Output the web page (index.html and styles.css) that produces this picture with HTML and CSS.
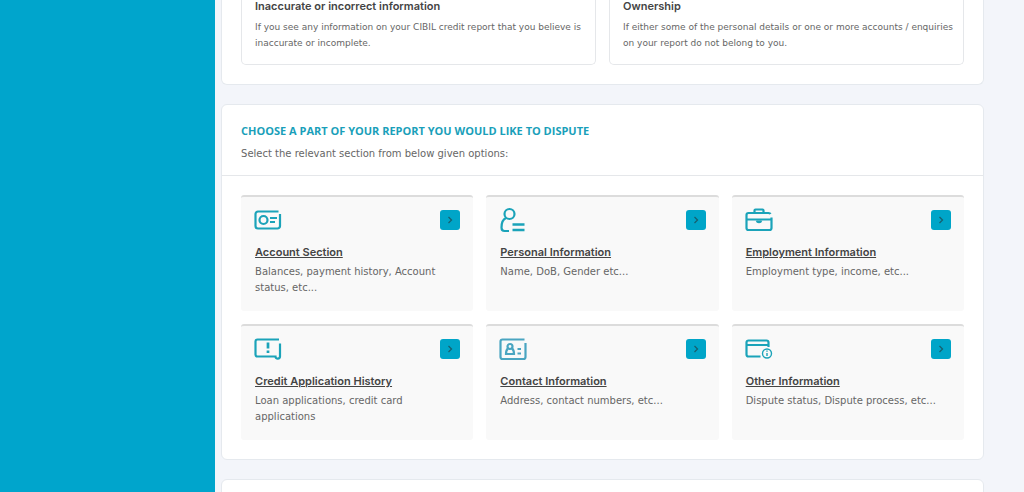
FILE: index.html
```html
<!DOCTYPE html>
<html lang="en">
<head>
<meta charset="utf-8">
<meta name="viewport" content="width=device-width, initial-scale=1">
<title>Dispute Center</title>
<link rel="stylesheet" href="styles.css">
</head>
<body>
<div class="layout">
  <aside class="sidebar" aria-label="Sidebar"></aside>
  <main class="content">
    <section class="panel panel-top">
      <article class="reason">
        <h3>Inaccurate or incorrect information</h3>
        <p>If you see any information on your CIBIL credit report that you believe is inaccurate or incomplete.</p>
      </article>
      <article class="reason">
        <h3>Ownership</h3>
        <p>If either some of the personal details or one or more accounts / enquiries on your report do not belong to you.</p>
      </article>
    </section>

    <section class="panel">
      <header class="panel-head">
        <h2>CHOOSE A PART OF YOUR REPORT YOU WOULD LIKE TO DISPUTE</h2>
        <p>Select the relevant section from below given options:</p>
      </header>
      <div class="options">
        <article class="option">
          <div class="option-bar">
            <svg class="icon" viewBox="0 0 28 28" aria-hidden="true"><path d="M24.500 5.500H4a2.500 2.500 0 0 0-2.500 2.500v12A2.500 2.500 0 0 0 4 22.500h19.500a2.500 2.500 0 0 0 2.500-2.500V8"/><circle cx="9.500" cy="14" r="4"/><path d="M16 12h7M16 16h5"/></svg>
            <button class="go" aria-label="Open Account Section"><svg viewBox="0 0 20 20"><path d="M8.500 7l3 3-3 3"/></svg></button>
          </div>
          <a href="#account">Account Section</a>
          <p>Balances, payment history, Account status, etc...</p>
        </article>
        <article class="option">
          <div class="option-bar">
            <svg class="icon" viewBox="0 0 28 28" aria-hidden="true"><circle cx="10.500" cy="8" r="5"/><path d="M7 12C3.500 13.500 2.500 17 2.500 21.500 2.500 24 3.500 25 5.500 25H10"/><path class="thick" d="M13.500 18.500h12M13.500 24h12"/></svg>
            <button class="go" aria-label="Open Personal Information"><svg viewBox="0 0 20 20"><path d="M8.500 7l3 3-3 3"/></svg></button>
          </div>
          <a href="#personal">Personal Information</a>
          <p>Name, DoB, Gender etc...</p>
        </article>
        <article class="option">
          <div class="option-bar">
            <svg class="icon" viewBox="0 0 28 28" aria-hidden="true"><path d="M25.500 8c-.3-.8-1-1-2-1H3.500A2 2 0 0 0 1.500 9V22a2 2 0 0 0 2 2h21a2 2 0 0 0 2-2V11.500M9.500 7V4.500a1 1 0 0 1 1-1H17.500a1 1 0 0 1 1 1V7M1.500 13.500H26.500"/><path class="thick" d="M12 14.500c.5 2 3.500 2 4 0"/></svg>
            <button class="go" aria-label="Open Employment Information"><svg viewBox="0 0 20 20"><path d="M8.500 7l3 3-3 3"/></svg></button>
          </div>
          <a href="#employment">Employment Information</a>
          <p>Employment type, income, etc...</p>
        </article>
        <article class="option">
          <div class="option-bar">
            <svg class="icon" viewBox="0 0 28 28" aria-hidden="true"><path d="M25 4.500H3.500A2 2 0 0 0 1.500 6.500V19.500a2 2 0 0 0 2 2H21.500c0 3 4.500 2.500 4.500 0V8.500"/><path class="thick" d="M14 7.500v6M14 15.500v2.500"/></svg>
            <button class="go" aria-label="Open Credit Application History"><svg viewBox="0 0 20 20"><path d="M8.500 7l3 3-3 3"/></svg></button>
          </div>
          <a href="#credit">Credit Application History</a>
          <p>Loan applications, credit card applications</p>
        </article>
        <article class="option">
          <div class="option-bar">
            <svg class="icon icon-soft" viewBox="0 0 28 28" aria-hidden="true"><path d="M25.500 4.500H3.500A2 2 0 0 0 1.500 6.500V22a2 2 0 0 0 2 2h21a2 2 0 0 0 2-2V8"/><circle cx="11" cy="11.500" r="2.500"/><path d="M9 13.500c-1.500 1-2 2.500-2 5.500h8c0-3-.5-4.500-2-5.500M18.500 14h3.500M18.500 18.500h3.500"/></svg>
            <button class="go" aria-label="Open Contact Information"><svg viewBox="0 0 20 20"><path d="M8.500 7l3 3-3 3"/></svg></button>
          </div>
          <a href="#contact">Contact Information</a>
          <p>Address, contact numbers, etc...</p>
        </article>
        <article class="option">
          <div class="option-bar">
            <svg class="icon" viewBox="0 0 28 28" aria-hidden="true"><path d="M15.500 21.500H3.500A2 2 0 0 1 1.500 19.500V7.500A2 2 0 0 1 3.500 5.500H21.500a2 2 0 0 1 2 2V12M1.500 10H23.500"/><g class="fine"><circle cx="22" cy="18.500" r="4.500"/><path d="M22 18v3M22 15.500v1.200"/></g></svg>
            <button class="go" aria-label="Open Other Information"><svg viewBox="0 0 20 20"><path d="M8.500 7l3 3-3 3"/></svg></button>
          </div>
          <a href="#other">Other Information</a>
          <p>Dispute status, Dispute process, etc...</p>
        </article>
      </div>
    </section>

    <section class="panel panel-next" aria-label="Next step"></section>
  </main>
</div>
</body>
</html>
```
FILE: styles.css
```css
* {
  box-sizing: border-box;
}

body {
  margin: 0;
  background: #f3f5fa;
  color: #666;
  font-family: "DejaVu Sans", sans-serif;
  font-size: 10px;
  line-height: 16px;
}

h2, h3, p {
  margin: 0;
}

.layout {
  display: grid;
  grid-template-columns: 21% 1fr;
  height: 100vh;
  overflow: hidden;
}

.sidebar {
  background: #00a5cc;
}

.content {
  display: flex;
  flex-direction: column;
  gap: 19px;
  padding: 0 40px 0 6px;
}

.panel {
  flex: none;
  background: #fff;
  border: 1px solid #e5e9ee;
  border-radius: 6px;
}

.panel-top {
  display: grid;
  grid-template-columns: 1fr 1fr;
  gap: 13px;
  padding: 0 19px 19px;
  border-top: 0;
  border-radius: 0 0 6px 6px;
}

.reason {
  padding: 0 4px 13px 13px;
  border: 1px solid #e5e7ea;
  border-top: 0;
  border-radius: 0 0 5px 5px;
  font-size: 9px;
}

.reason h3 {
  margin-bottom: 6px;
  color: #444;
  font-family: Inter, sans-serif;
  font-size: 11px;
  font-weight: 600;
  line-height: 13px;
}

.panel-head {
  padding: 18px 19px 13px;
  border-bottom: 1px solid #e5e7ea;
}

.panel-head h2 {
  margin-bottom: 7px;
  color: #1a9fba;
  font-family: "Open Sans", sans-serif;
  font-size: 11px;
  font-weight: 700;
  line-height: 16px;
}

.options {
  display: grid;
  grid-template-columns: repeat(3, 1fr);
  grid-auto-rows: 1fr;
  gap: 13px;
  padding: 19px;
}

.option {
  min-height: 116px;
  padding: 9px 13px 13px 14px;
  border-top: 2px solid #dcdcdc;
  border-radius: 3px;
  background: #f9f9f9;
}

.option-bar {
  display: flex;
  align-items: center;
  justify-content: space-between;
  height: 28px;
  margin-bottom: 10px;
}

.option a {
  display: block;
  width: fit-content;
  margin-bottom: 4px;
  color: #444;
  font-family: Inter, sans-serif;
  font-size: 11px;
  font-weight: 600;
}

.icon {
  width: 28px;
  height: 28px;
  margin-left: -1px;
  fill: none;
  stroke: #1ba3b9;
  stroke-width: 2.2;
}

.icon-soft {
  stroke: #4aa5c1;
}

.thick {
  stroke-width: 2.7;
}

.fine {
  stroke-width: 1.4;
}

.go {
  width: 20px;
  height: 20px;
  padding: 0;
  border: 0;
  border-radius: 3px;
  background: #00a5c8;
  cursor: pointer;
}

.go svg {
  display: block;
  width: 20px;
  height: 20px;
  fill: none;
  stroke: #17606f;
  stroke-width: 1.3;
}

.panel-next {
  min-height: 80px;
}
```
